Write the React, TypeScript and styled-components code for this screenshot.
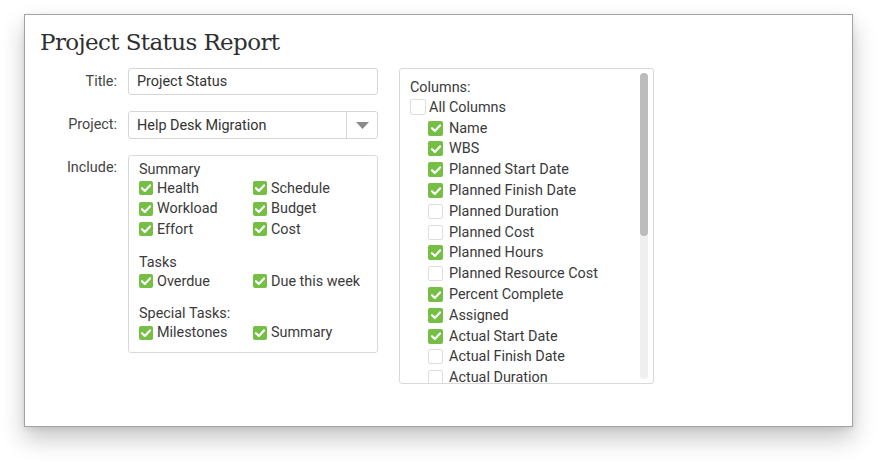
import React from "react";
import styled, { createGlobalStyle } from "styled-components";

const GlobalStyle = createGlobalStyle`
  html, body {
    margin: 0;
    padding: 0;
    background: #ffffff;
    font-family: Roboto, "Liberation Sans", Arial, sans-serif;
    color: #3a3a3a;
  }
`;

const Page = styled.div`
  padding: 14px 0 0 24px;
  width: 878px;
  height: 462px;
  box-sizing: border-box;
`;

const Panel = styled.div`
  width: 829px;
  height: 413px;
  box-sizing: border-box;
  border: 1px solid #a3a3a3;
  background: #fff;
  box-shadow: 0 12px 22px rgba(0, 0, 0, 0.22), 0 2px 6px rgba(0, 0, 0, 0.08);
`;

const Heading = styled.h1`
  margin: 12px 0 0 15px;
  font-family: "DejaVu Serif", "Liberation Serif", serif;
  font-weight: 400;
  font-size: 23px;
  line-height: 30px;
  color: #2f2f2f;
  letter-spacing: -0.6px;
`;

const Body = styled.div`
  display: flex;
  gap: 21px;
  margin-top: 11px;
`;

const Form = styled.div`
  display: grid;
  grid-template-columns: 92px 250px;
  column-gap: 11px;
  row-gap: 16px;
  align-items: start;
  align-content: start;
`;

const Label = styled.div<{ $h?: number }>`
  text-align: right;
  font-size: 14.4px;
  line-height: ${({ $h }) => $h ?? 27}px;
  color: #444;
`;

const TextInput = styled.div`
  height: 27px;
  box-sizing: border-box;
  border: 1px solid #d6d6d6;
  border-radius: 3px;
  padding: 0 8px;
  font-size: 14.4px;
  line-height: 25px;
  color: #333;
`;

const Select = styled.div`
  height: 28px;
  box-sizing: border-box;
  border: 1px solid #d6d6d6;
  border-radius: 3px;
  display: flex;
  align-items: stretch;
  font-size: 14.4px;
  color: #333;
`;

const SelectValue = styled.div`
  flex: 1;
  padding: 0 8px;
  line-height: 27px;
`;

const SelectArrow = styled.div`
  width: 30px;
  border-left: 1px solid #d6d6d6;
  display: flex;
  align-items: center;
  justify-content: center;
`;

const Box = styled.div`
  border: 1px solid #d9d9d9;
  border-radius: 3px;
  box-sizing: border-box;
`;

const IncludeBox = styled(Box)`
  height: 198px;
  padding: 5px 10px;
`;

const GroupTitle = styled.div<{ $top?: number; $h?: number }>`
  font-size: 14.4px;
  line-height: ${({ $h }) => $h ?? 17}px;
  margin-top: ${({ $top }) => $top ?? 0}px;
  color: #3a3a3a;
`;

const OptionGrid = styled.div`
  display: grid;
  grid-template-columns: 114px 114px;
`;

const Option = styled.div<{ $indent?: number; $h?: number }>`
  display: flex;
  align-items: center;
  height: ${({ $h }) => $h ?? 20.6}px;
  font-size: 14.4px;
  color: #3a3a3a;
  padding-left: ${({ $indent }) => $indent ?? 0}px;
  white-space: nowrap;
`;

const Check = styled.span<{ $on: boolean; $size?: number; $gap?: number }>`
  width: ${({ $size }) => $size ?? 14}px;
  height: ${({ $size }) => $size ?? 14}px;
  flex: none;
  box-sizing: border-box;
  border-radius: 2px;
  margin-right: ${({ $gap }) => $gap ?? 4}px;
  display: inline-flex;
  align-items: center;
  justify-content: center;
  background: ${({ $on }) => ($on ? "#74bf44" : "#fff")};
  border: ${({ $on }) => ($on ? "none" : "1px solid #dedede")};
`;

const ColumnsBox = styled(Box)`
  width: 255px;
  height: 316px;
  position: relative;
  overflow: hidden;
  padding: 10px 0 0 10px;
`;

const ScrollTrack = styled.div`
  position: absolute;
  right: 5px;
  top: 4px;
  bottom: 4px;
  width: 8px;
  border-radius: 4px;
  background: #efefef;
`;

const ScrollThumb = styled.div`
  width: 8px;
  height: 163px;
  border-radius: 4px;
  background: #bcbcbc;
`;

const Tick = () => (
  <svg width="10" height="8" viewBox="0 0 10 8">
    <path d="M1 4.2 L3.8 7 L9 1.4" fill="none" stroke="#fff" strokeWidth="2.2" strokeLinecap="round" strokeLinejoin="round" />
  </svg>
);

const CheckItem = ({
  label,
  on,
  size,
  gap,
  indent,
  h,
}: {
  label: string;
  on: boolean;
  size?: number;
  gap?: number;
  indent?: number;
  h?: number;
}) => (
  <Option $indent={indent} $h={h}>
    <Check $on={on} $size={size} $gap={gap}>
      {on && <Tick />}
    </Check>
    {label}
  </Option>
);

const columns: [string, boolean][] = [
  ["Name", true],
  ["WBS", true],
  ["Planned Start Date", true],
  ["Planned Finish Date", true],
  ["Planned Duration", false],
  ["Planned Cost", false],
  ["Planned Hours", true],
  ["Planned Resource Cost", false],
  ["Percent Complete", true],
  ["Assigned", true],
  ["Actual Start Date", true],
  ["Actual Finish Date", false],
  ["Actual Duration", false],
];

const App = () => {
  return (
    <Page>
      <GlobalStyle />
      <Panel>
        <Heading>Project Status Report</Heading>
        <Body>
          <Form>
            <Label>Title:</Label>
            <TextInput>Project Status</TextInput>
            <Label $h={28}>Project:</Label>
            <Select>
              <SelectValue>Help Desk Migration</SelectValue>
              <SelectArrow>
                <svg width="13" height="7" viewBox="0 0 13 7">
                  <path d="M0 0 H13 L6.5 7 Z" fill="#8a8a8a" />
                </svg>
              </SelectArrow>
            </Select>
            <Label $h={26}>Include:</Label>
            <IncludeBox>
              <GroupTitle>Summary</GroupTitle>
              <OptionGrid>
                <CheckItem label="Health" on />
                <CheckItem label="Schedule" on />
                <CheckItem label="Workload" on />
                <CheckItem label="Budget" on />
                <CheckItem label="Effort" on />
                <CheckItem label="Cost" on />
              </OptionGrid>
              <GroupTitle $top={14}>Tasks</GroupTitle>
              <OptionGrid>
                <CheckItem label="Overdue" on />
                <CheckItem label="Due this week" on />
              </OptionGrid>
              <GroupTitle $top={14}>Special Tasks:</GroupTitle>
              <OptionGrid>
                <CheckItem label="Milestones" on />
                <CheckItem label="Summary" on />
              </OptionGrid>
            </IncludeBox>
          </Form>
          <ColumnsBox>
            <GroupTitle $h={18}>Columns:</GroupTitle>
            <CheckItem label="All Columns" on={false} size={16} gap={3} h={20.8} />
            {columns.map(([label, on]) => (
              <CheckItem key={label} label={label} on={on} size={15} gap={6} indent={18} h={20.8} />
            ))}
            <ScrollTrack>
              <ScrollThumb />
            </ScrollTrack>
          </ColumnsBox>
        </Body>
      </Panel>
    </Page>
  );
};

export default App;
